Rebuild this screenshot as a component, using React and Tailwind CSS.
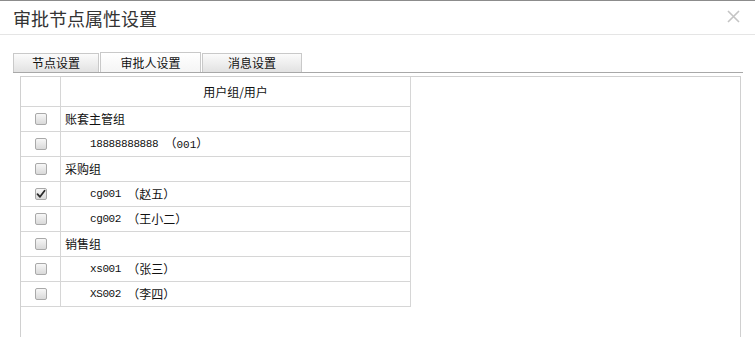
import React from "react";

const CJK = { fontFamily: '"Noto Sans CJK SC", "Noto Sans", sans-serif' };
const MONO = { fontFamily: '"Liberation Mono", "DejaVu Sans Mono", monospace' };

function Checkbox({ checked }) {
  return (
    <div className="w-[12px] h-[12px] rounded-[2px] border border-[#a9a9a9] bg-gradient-to-b from-[#f7f7f7] to-[#d9d9d9] flex items-center justify-center">
      {checked && (
        <svg width="10" height="10" viewBox="0 0 10 10">
          <path d="M1.5 5.2 L4 7.8 L8.6 1.8" fill="none" stroke="#2a2a2a" strokeWidth="1.8" strokeLinecap="round" strokeLinejoin="round" />
        </svg>
      )}
    </div>
  );
}

const rows = [
  { type: "group", name: "账套主管组" },
  { type: "user", code: "18888888888", name: "001", latinName: true },
  { type: "group", name: "采购组" },
  { type: "user", code: "cg001", name: "赵五", checked: true },
  { type: "user", code: "cg002", name: "王小二" },
  { type: "group", name: "销售组" },
  { type: "user", code: "xs001", name: "张三" },
  { type: "user", code: "XS002", name: "李四" },
];

export default function App() {
  return (
    <div className="relative w-[755px] h-[337px] bg-white overflow-hidden border-t border-[#8c8c8c]" style={CJK}>
      {/* Header */}
      <div className="h-[34px] border-b border-[#e5e5e5] flex items-center pl-[13px]">
        <span className="text-[18px] leading-none text-[#333]">审批节点属性设置</span>
      </div>
      <button className="absolute right-[15px] top-[8px] w-[14px] h-[14px] flex items-center justify-center">
        <svg width="13" height="13" viewBox="0 0 13 13">
          <path d="M1 1 L12 12 M12 1 L1 12" stroke="#c4c4c4" strokeWidth="1.6" />
        </svg>
      </button>

      {/* Tabs */}
      <div className="mt-[17px] ml-[13px] mr-[12px] flex items-end border-b border-[#a8a8a8]">
        <div className="w-[86px] h-[19px] border border-b-0 border-[#c9c9c9] bg-gradient-to-b from-[#fbfbfb] to-[#e2e2e2] flex items-center justify-center text-[12px] text-[#111] leading-none">
          节点设置
        </div>
        <div className="ml-[1px] w-[101px] h-[20px] border border-b-0 border-[#c9c9c9] bg-gradient-to-b from-[#ffffff] to-[#f5f5f5] flex items-center justify-center text-[12px] text-[#111] leading-none">
          审批人设置
        </div>
        <div className="ml-[1px] w-[100px] h-[19px] border border-b-0 border-[#c9c9c9] bg-gradient-to-b from-[#fbfbfb] to-[#e2e2e2] flex items-center justify-center text-[12px] text-[#111] leading-none">
          消息设置
        </div>
      </div>

      {/* Content box */}
      <div className="mt-[3px] ml-[20px] w-[721px] h-[300px] border border-[#d0d0d0]">
        <div className="grid grid-cols-[40px_350px] w-[390px]">
          <div className="h-[30px] border-r border-b border-[#d6d6d6]" />
          <div className="h-[30px] border-r border-b border-[#d6d6d6] flex items-center justify-center text-[12px] text-[#111]">
            用户组/用户
          </div>
          {rows.map((r, i) => (
            <React.Fragment key={i}>
              <div className="h-[25px] border-r border-b border-[#d6d6d6] flex items-center justify-center pl-[1px]">
                <Checkbox checked={r.checked} />
              </div>
              <div className="h-[25px] border-r border-b border-[#d6d6d6] flex items-center text-[#111]">
                {r.type === "group" ? (
                  <span className="pl-[4px] text-[12px]">{r.name}</span>
                ) : (
                  <span className="pl-[29px] flex items-center whitespace-pre">
                    <span className="text-[11px] tracking-[-0.4px]" style={MONO}>{r.code} </span>
                    {r.latinName ? (
                      <span className="text-[12px]">
                        （<span className="text-[11px]" style={MONO}>{r.name}</span>）
                      </span>
                    ) : (
                      <span className="text-[12px]">（{r.name}）</span>
                    )}
                  </span>
                )}
              </div>
            </React.Fragment>
          ))}
        </div>
      </div>
    </div>
  );
}
